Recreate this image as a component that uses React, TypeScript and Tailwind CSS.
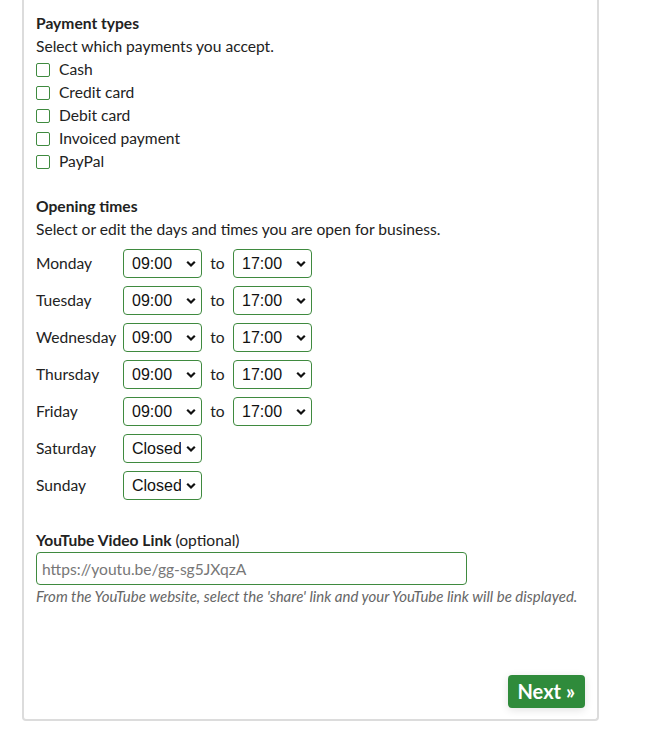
import React from "react";

const payments = ["Cash", "Credit card", "Debit card", "Invoiced payment", "PayPal"];

const days = [
  { day: "Monday", open: "09:00", close: "17:00" },
  { day: "Tuesday", open: "09:00", close: "17:00" },
  { day: "Wednesday", open: "09:00", close: "17:00" },
  { day: "Thursday", open: "09:00", close: "17:00" },
  { day: "Friday", open: "09:00", close: "17:00" },
  { day: "Saturday", open: "Closed" },
  { day: "Sunday", open: "Closed" },
];

const Chevron = () => (
  <svg
    width="10"
    height="7"
    viewBox="0 0 10 7"
    className="pointer-events-none absolute right-[6px] top-1/2 -translate-y-1/2"
  >
    <path d="M1.2 1.2 L5 5 L8.8 1.2" fill="none" stroke="#111" strokeWidth="2.2" />
  </svg>
);

const TimeSelect: React.FC<{ value: string }> = ({ value }) => (
  <div className="relative w-[79px] h-[29px]">
    <select
      defaultValue={value}
      className="appearance-none w-full h-full border border-[#3f8a3f] rounded-[4px] bg-white pl-[8px] pr-5 text-[16px] text-[#111] font-['Liberation_Sans',Arial,sans-serif] outline-none"
    >
      <option>{value}</option>
    </select>
    <Chevron />
  </div>
);

const App: React.FC = () => {
  return (
    <div className="w-[647px] h-[747px] bg-white font-['Lato','Noto_Sans',sans-serif] text-[15.6px] text-[#222] leading-[23px]">
      <div className="ml-[22px] w-[577px] h-[721px] border-2 border-t-0 border-[#dcdcdc] rounded-b-[4px] px-[12px] pt-[12px] flex flex-col">
        {/* Payment types */}
        <h3 className="font-bold">Payment types</h3>
        <p>Select which payments you accept.</p>
        <div className="flex flex-col">
          {payments.map((p) => (
            <label key={p} className="flex items-center h-[23px]">
              <span className="w-[14px] h-[14px] border border-[#3f8a3f] rounded-[2px] mr-[9px] bg-white" />
              {p}
            </label>
          ))}
        </div>

        {/* Opening times */}
        <h3 className="font-bold mt-[22px]">Opening times</h3>
        <p>Select or edit the days and times you are open for business.</p>
        <div className="flex flex-col gap-[8px] mt-[8px]">
          {days.map((d) => (
            <div key={d.day} className="flex items-center">
              <span className="w-[87px]">{d.day}</span>
              <TimeSelect value={d.open} />
              {d.close && (
                <>
                  <span className="w-[31px] text-center">to</span>
                  <TimeSelect value={d.close} />
                </>
              )}
            </div>
          ))}
        </div>

        {/* YouTube link */}
        <label className="mt-[29px]">
          <span className="font-bold">YouTube Video Link</span> (optional)
        </label>
        <input
          type="text"
          placeholder="https://youtu.be/gg-sg5JXqzA"
          className="w-[431px] h-[33px] border border-[#3f8a3f] rounded-[4px] px-[5px] text-[15.6px] placeholder:text-[#777] outline-none"
        />
        <p className="italic text-[15px] text-[#666]">
          From the YouTube website, select the 'share' link and your YouTube link will be displayed.
        </p>

        <div className="mt-auto mb-[11px] flex justify-end">
          <button className="bg-[#2f8b3b] text-white font-bold text-[20px] px-[10px] h-[33px] rounded-[4px] shadow-[0_2px_8px_rgba(0,0,0,0.12)]">
            Next »
          </button>
        </div>
      </div>
    </div>
  );
};

export default App;
